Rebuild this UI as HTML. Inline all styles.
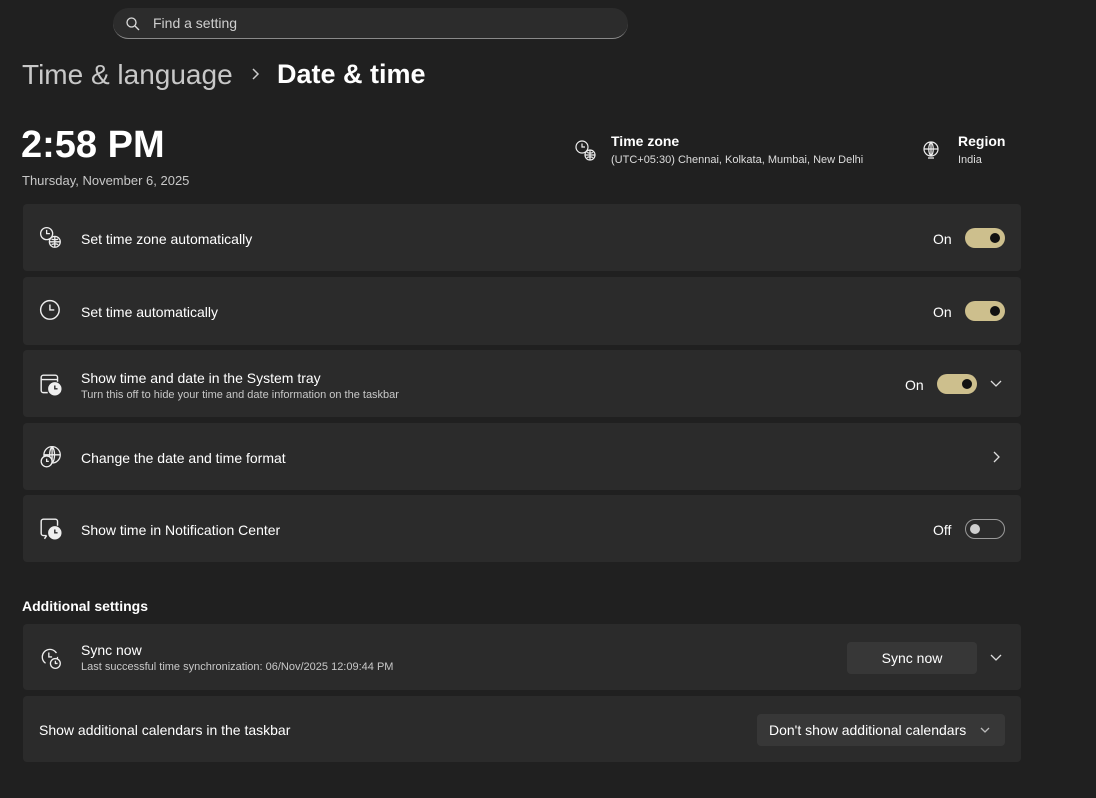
<!DOCTYPE html>
<html><head><style>
body{margin:0;width:1096px;height:798px;background:#202020;font-family:"Liberation Sans",sans-serif;color:#fff;position:relative;overflow:hidden}
.a{position:absolute}
.search{left:113px;top:8px;width:515px;height:31px;background:#2c2c2c;border-radius:16px;border-bottom:1px solid #8a8a8a;box-sizing:border-box}
.card{position:absolute;left:23px;width:998px;background:#2b2b2b;border-radius:4px}
.lbl{position:absolute;left:58px;font-size:14px;color:#fff}
.sub{position:absolute;left:58px;font-size:11px;color:#c8c8c8}
.ico{position:absolute;left:16px;width:24px;height:24px}
.tog{position:absolute;width:40px;height:20px;border-radius:10px;background:#cdbf8d;box-sizing:border-box}
.tog::after{content:"";position:absolute;right:5px;top:5px;width:10px;height:10px;border-radius:50%;background:#111}
.off{background:none;border:1px solid #9a9a9a}
.off::after{left:4px;top:4px;right:auto;width:10px;height:10px;background:#cfcfcf}
.on{position:absolute;font-size:14px;color:#fff}
.chev{position:absolute;width:20px;height:20px}
</style></head><body>
<div class="a search">
<svg class="a" style="left:12px;top:8px" width="16" height="16" viewBox="0 0 16 16"><circle cx="6.5" cy="6.5" r="4.5" fill="none" stroke="#ddd" stroke-width="1.3"/><path d="M10 10l4 4" stroke="#ddd" stroke-width="1.3"/></svg>
<div class="a" style="left:40px;top:7px;font-size:14px;color:#cfcfcf">Find a setting</div></div>
<div class="a" style="left:22px;top:59px;font-size:28px;color:#c8c8c8">Time &amp; language</div>
<svg class="a" style="left:250px;top:67px" width="12" height="14" viewBox="0 0 12 14"><path d="M3 2l5 5-5 5" fill="none" stroke="#ccc" stroke-width="1.5"/></svg>
<div class="a" style="left:277px;top:59px;font-size:27px;font-weight:bold;color:#fff">Date &amp; time</div>
<div class="a" style="left:21px;top:124px;font-size:38px;font-weight:bold">2:58 PM</div>
<div class="a" style="left:22px;top:173px;font-size:13px;color:#c8c8c8">Thursday, November 6, 2025</div>
<svg class="a" style="left:574px;top:139px" width="24" height="24" viewBox="0 0 24 24" fill="none" stroke="#eee" stroke-width="1.2"><circle cx="8" cy="8" r="6"/><path d="M8 4.5V8h3"/><circle cx="16" cy="16" r="5" fill="#202020"/><path d="M11 16h10M16 11v10M13 13.5c2 .8 4 .8 6 0M13 18.5c2-.8 4-.8 6 0"/></svg>
<div class="a" style="left:611px;top:133px;font-size:14px;font-weight:bold">Time zone</div>
<div class="a" style="left:611px;top:154px;font-size:11px;color:#ddd">(UTC+05:30) Chennai, Kolkata, Mumbai, New Delhi</div>
<svg class="a" style="left:921px;top:140px" width="20" height="20" viewBox="0 0 20 20" fill="none" stroke="#eee" stroke-width="1.2"><circle cx="10" cy="9" r="7"/><path d="M3 9h14M10 2v14M10 2c-3 3-3 11 0 14M10 2c3 3 3 11 0 14M7 18h6"/></svg>
<div class="a" style="left:958px;top:133px;font-size:14px;font-weight:bold">Region</div>
<div class="a" style="left:958px;top:154px;font-size:11px;color:#ddd">India</div>

<div class="card" style="top:204px;height:67px">
<svg class="ico" style="top:22px" viewBox="0 0 22 22" fill="none" stroke="#eee" stroke-width="1.2"><circle cx="7" cy="7" r="5.5"/><path d="M7 3.5V7h3"/><circle cx="14.5" cy="14.5" r="5" fill="#2b2b2b"/><path d="M9.5 14.5h10M14.5 9.5v10M11.5 12c2 .8 4 .8 6 0M11.5 17c2-.8 4-.8 6 0"/></svg>
<div class="lbl" style="top:27px">Set time zone automatically</div>
<div class="on" style="left:910px;top:27px">On</div><div class="tog" style="left:942px;top:24px"></div></div>

<div class="card" style="top:277px;height:68px">
<svg class="ico" style="top:22px" viewBox="0 0 22 22" fill="none" stroke="#eee" stroke-width="1.3"><circle cx="10" cy="10" r="8.5"/><path d="M10 5v5h4"/></svg>
<div class="lbl" style="top:27px">Set time automatically</div>
<div class="on" style="left:910px;top:27px">On</div><div class="tog" style="left:942px;top:24px"></div></div>

<div class="card" style="top:350px;height:67px">
<svg class="ico" style="top:23px" viewBox="0 0 22 22" fill="none" stroke="#eee" stroke-width="1.3"><path d="M8 18H4a2 2 0 0 1-2-2V4a2 2 0 0 1 2-2h11a2 2 0 0 1 2 2v4M2 6h15"/><circle cx="14.5" cy="14.5" r="5.5" fill="#eee"/><path d="M14.5 11.5v3h2.5" stroke="#2b2b2b"/></svg>
<div class="lbl" style="top:20px">Show time and date in the System tray</div>
<div class="sub" style="top:39px">Turn this off to hide your time and date information on the taskbar</div>
<div class="on" style="left:882px;top:27px">On</div><div class="tog" style="left:914px;top:24px"></div>
<svg class="chev" style="left:963px;top:24px" viewBox="0 0 20 20"><path d="M5 7l5 5 5-5" fill="none" stroke="#ddd" stroke-width="1.3"/></svg></div>

<div class="card" style="top:423px;height:67px">
<svg class="ico" style="top:22px" viewBox="0 0 22 22" fill="none" stroke="#eee" stroke-width="1.2"><circle cx="12" cy="9" r="7.5"/><path d="M4.5 9h15M12 1.5v15M12 1.5c-3 3-3 12 0 15M12 1.5c3 3 3 12 0 15"/><circle cx="7" cy="15" r="5" fill="#2b2b2b"/><path d="M7 12.5V15h2"/></svg>
<div class="lbl" style="top:27px">Change the date and time format</div>
<svg class="chev" style="left:963px;top:24px" viewBox="0 0 20 20"><path d="M8 5l5 5-5 5" fill="none" stroke="#ddd" stroke-width="1.3"/></svg></div>

<div class="card" style="top:495px;height:67px">
<svg class="ico" style="top:22px" viewBox="0 0 22 22" fill="none" stroke="#eee" stroke-width="1.3"><path d="M7 17H4a2 2 0 0 1-2-2V4a2 2 0 0 1 2-2h11a2 2 0 0 1 2 2v4M7 17l-2 3"/><circle cx="14.5" cy="14.5" r="5.5" fill="#eee"/><path d="M14.5 11.5v3h2.5" stroke="#2b2b2b"/></svg>
<div class="lbl" style="top:27px">Show time in Notification Center</div>
<div class="on" style="left:910px;top:27px">Off</div><div class="tog off" style="left:942px;top:24px"></div></div>

<div class="a" style="left:22px;top:598px;font-size:14px;font-weight:bold">Additional settings</div>

<div class="card" style="top:624px;height:66px">
<svg class="ico" style="top:22px" viewBox="0 0 22 22" fill="none" stroke="#eee" stroke-width="1.2"><path d="M3 10a7 7 0 0 1 13-3.5M17 10a7 7 0 0 1-1 3.5M3 10a7 7 0 0 0 3 5.8"/><path d="M9 6v4h3"/><circle cx="15" cy="16" r="4.5" fill="#2b2b2b"/><path d="M15 13.5V16h2"/></svg>
<div class="lbl" style="top:18px">Sync now</div>
<div class="sub" style="top:37px">Last successful time synchronization: 06/Nov/2025 12:09:44 PM</div>
<div class="a" style="left:824px;top:18px;width:130px;height:32px;background:#373737;border-radius:4px;font-size:14px;text-align:center;line-height:32px">Sync now</div>
<svg class="chev" style="left:963px;top:24px" viewBox="0 0 20 20"><path d="M5 7l5 5 5-5" fill="none" stroke="#ddd" stroke-width="1.3"/></svg></div>

<div class="card" style="top:696px;height:66px">
<div class="lbl" style="left:16px;top:26px">Show additional calendars in the taskbar</div>
<div class="a" style="left:734px;top:18px;width:248px;height:32px;background:#373737;border-radius:4px;font-size:14px;line-height:32px;box-sizing:border-box;padding-left:12px">Don't show additional calendars</div>
<svg class="chev" style="left:952px;top:24px" width="16" height="16" viewBox="0 0 20 20"><path d="M6 8l4 4 4-4" fill="none" stroke="#bbb" stroke-width="1.3"/></svg></div>
</body></html>
